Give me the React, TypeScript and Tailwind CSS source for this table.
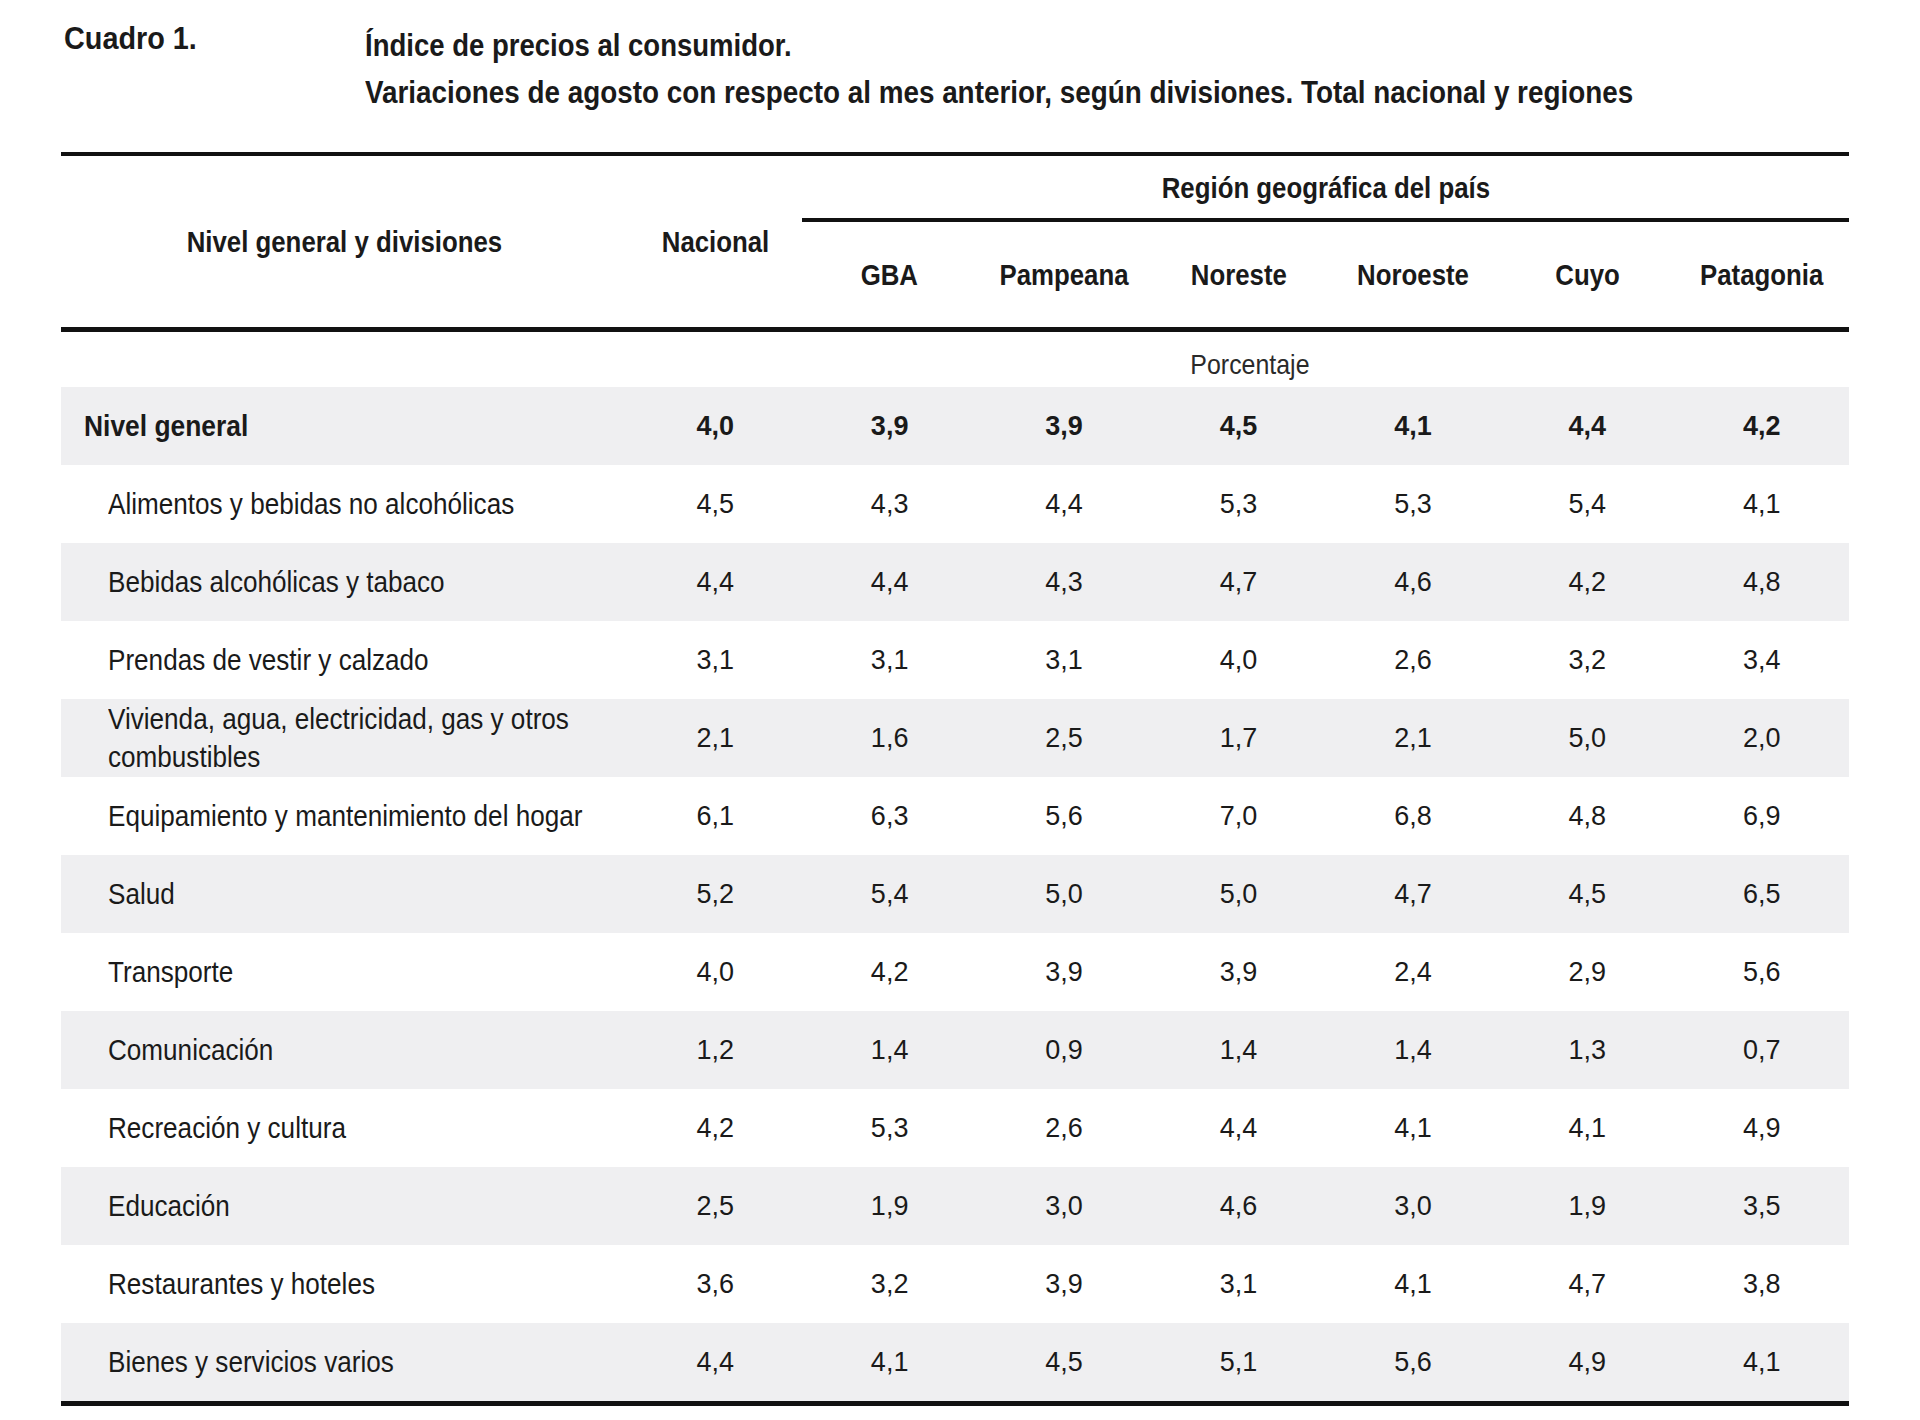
import React from 'react';

type Row = { label: React.ReactNode; values: string[]; bold?: boolean };

const regions = ['GBA', 'Pampeana', 'Noreste', 'Noroeste', 'Cuyo', 'Patagonia'];

const rows: Row[] = [
  { label: 'Nivel general', values: ['4,0', '3,9', '3,9', '4,5', '4,1', '4,4', '4,2'], bold: true },
  { label: 'Alimentos y bebidas no alcohólicas', values: ['4,5', '4,3', '4,4', '5,3', '5,3', '5,4', '4,1'] },
  { label: 'Bebidas alcohólicas y tabaco', values: ['4,4', '4,4', '4,3', '4,7', '4,6', '4,2', '4,8'] },
  { label: 'Prendas de vestir y calzado', values: ['3,1', '3,1', '3,1', '4,0', '2,6', '3,2', '3,4'] },
  {
    label: (
      <>
        Vivienda, agua, electricidad, gas y otros
        <br />
        combustibles
      </>
    ),
    values: ['2,1', '1,6', '2,5', '1,7', '2,1', '5,0', '2,0'],
  },
  { label: 'Equipamiento y mantenimiento del hogar', values: ['6,1', '6,3', '5,6', '7,0', '6,8', '4,8', '6,9'] },
  { label: 'Salud', values: ['5,2', '5,4', '5,0', '5,0', '4,7', '4,5', '6,5'] },
  { label: 'Transporte', values: ['4,0', '4,2', '3,9', '3,9', '2,4', '2,9', '5,6'] },
  { label: 'Comunicación', values: ['1,2', '1,4', '0,9', '1,4', '1,4', '1,3', '0,7'] },
  { label: 'Recreación y cultura', values: ['4,2', '5,3', '2,6', '4,4', '4,1', '4,1', '4,9'] },
  { label: 'Educación', values: ['2,5', '1,9', '3,0', '4,6', '3,0', '1,9', '3,5'] },
  { label: 'Restaurantes y hoteles', values: ['3,6', '3,2', '3,9', '3,1', '4,1', '4,7', '3,8'] },
  { label: 'Bienes y servicios varios', values: ['4,4', '4,1', '4,5', '5,1', '5,6', '4,9', '4,1'] },
];

const cols = 'grid grid-cols-[567px_repeat(7,minmax(0,1fr))]';

// the source table is set in a condensed face; squeeze the text horizontally
const Narrow = ({ children, left }: { children: React.ReactNode; left?: boolean }) => (
  <span className={`inline-block whitespace-nowrap scale-x-[0.86] ${left ? 'origin-left' : 'origin-center'}`}>
    {children}
  </span>
);

export default function App() {
  return (
    <div
      className="min-h-[1420px] w-[1920px] bg-white text-[#1a1a1a]"
      style={{ fontFamily: '"Liberation Sans", Arial, sans-serif' }}
    >
      <div className="ml-[61px] w-[1788px]">
        {/* Title */}
        <div className="flex items-start text-[32px] font-bold leading-[47px]">
          <div className="w-[304px] shrink-0 pl-[3px] pt-[15px]">
            <span className="inline-block origin-left scale-x-[0.9]">Cuadro 1.</span>
          </div>
          <div className="pt-[22px]">
            <Narrow left>Índice de precios al consumidor.</Narrow>
            <br />
            <span className="inline-block whitespace-nowrap origin-left scale-x-[0.87]">
              Variaciones de agosto con respecto al mes anterior, según divisiones. Total nacional y regiones
            </span>
          </div>
        </div>

        {/* Table */}
        <div className="mt-[36px] border-t-4 border-[#111]">
          <div className={`${cols} border-b-[5px] border-[#111] text-[30px] font-bold`}>
            <div className="row-span-2 flex items-center justify-center">
              <Narrow>Nivel general y divisiones</Narrow>
            </div>
            <div className="row-span-2 flex items-center justify-center">
              <Narrow>Nacional</Narrow>
            </div>
            <div className="col-span-6 flex h-[66px] items-center justify-center border-b-4 border-[#111]">
              <Narrow>Región geográfica del país</Narrow>
            </div>
            {regions.map((r) => (
              <div key={r} className="flex h-[105px] items-center justify-center">
                <Narrow>{r}</Narrow>
              </div>
            ))}
          </div>

          <div className={`${cols} h-[55px] text-[28px] text-[#2a2a2a]`}>
            <div />
            <div className="col-span-7 flex items-end justify-center pb-[2px] pl-[22px] leading-[40px]">
              <span className="inline-block scale-x-[0.89]">Porcentaje</span>
            </div>
          </div>

          <div className="border-b-[5px] border-[#111]">
            {rows.map((row, i) => (
              <div
                key={i}
                className={`${cols} h-[78px] items-center ${i % 2 === 0 ? 'bg-[#efeff1]' : 'bg-white'} ${
                  row.bold ? 'font-bold' : ''
                }`}
              >
                <div className={`text-[30px] leading-[38px] ${row.bold ? 'pl-[23px]' : 'pl-[47px]'}`}>
                  <span
                    className={`inline-block whitespace-nowrap origin-left ${row.bold ? 'scale-x-[0.88]' : 'scale-x-[0.87]'}`}
                  >
                    {row.label}
                  </span>
                </div>
                {row.values.map((v, j) => (
                  <div key={j} className="text-center text-[27px]">
                    {v}
                  </div>
                ))}
              </div>
            ))}
          </div>
        </div>
      </div>
    </div>
  );
}
